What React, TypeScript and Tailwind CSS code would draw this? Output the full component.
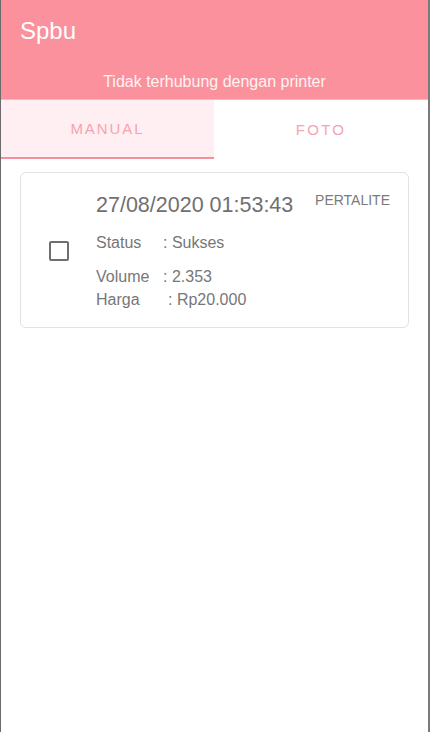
const App = () => {
  return (
    <div
      className="flex flex-col h-[732px] bg-white border-l border-r-2 border-l-[#6b6b6b] border-r-[#7a7a7a]"
      style={{ fontFamily: "'Liberation Sans', Arial, sans-serif" }}
    >
      <div className="bg-[#fb919d]">
        <div className="flex items-center h-[62px] px-[19px]">
          <h1 className="text-[24px] text-white">Spbu</h1>
        </div>
        <div className="flex items-center justify-center h-[37px] pt-[2px] text-[16px] text-[#fff3f4]">
          Tidak terhubung dengan printer
        </div>
      </div>

      <div className="flex h-[60px] border-t border-[#fbb7bf]">
        <button className="flex-1 max-w-[213px] flex items-center justify-center pt-[2px] bg-[#ffeff2] border-b-2 border-[#f4909c] text-[15px] tracking-[0.13em] text-[#f6a3ad]">
          MANUAL
        </button>
        <button className="flex-1 flex items-center justify-center pt-[2px] text-[15px] tracking-[0.15em] text-[#f6a3ad]">
          FOTO
        </button>
      </div>

      <div className="mx-[19px] mt-[13px] h-[156px] flex border border-[#e2e2e2] rounded-md">
        <div className="w-[75px] flex items-center justify-center">
          <div className="w-[20px] h-[20px] mt-[1px] border-2 border-[#6f6f6f] rounded-[2px]" />
        </div>
        <div className="flex-1 pt-[19px] pr-[18px]">
          <div className="flex justify-between items-start">
            <span className="text-[21.5px] leading-[26px] text-[#707070]">27/08/2020 01:53:43</span>
            <span className="text-[14px] leading-[18px] text-[#7a7a7a] -mt-px">PERTALITE</span>
          </div>
          <div className="mt-[15px] text-[16px] leading-[20px] text-[#777] flex">
            <span className="w-[67px]">Status</span>
            <span>: Sukses</span>
          </div>
          <div className="mt-[12px] text-[16px] leading-[23px] text-[#777]">
            <div className="flex">
              <span className="w-[67px]">Volume</span>
              <span>: 2.353</span>
            </div>
            <div className="flex">
              <span className="w-[72px]">Harga</span>
              <span>: Rp20.000</span>
            </div>
          </div>
        </div>
      </div>
    </div>
  );
};

export default App;
